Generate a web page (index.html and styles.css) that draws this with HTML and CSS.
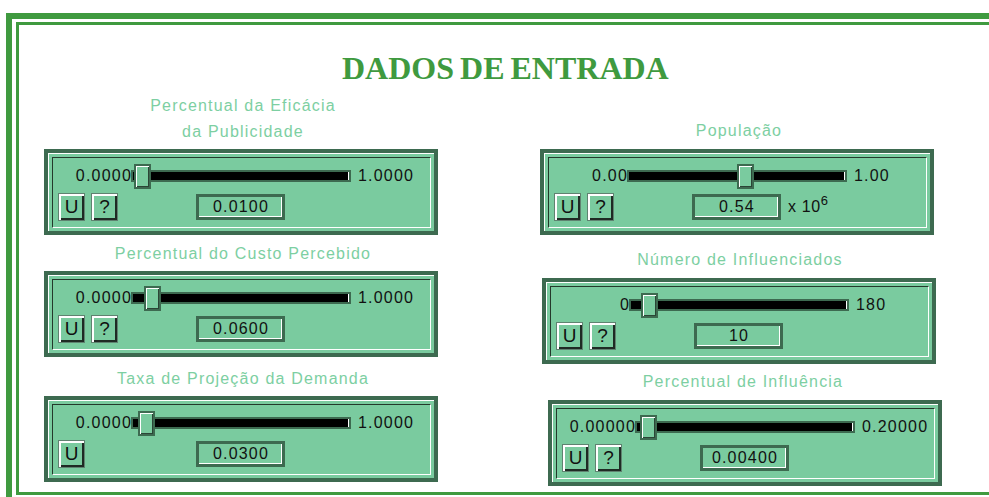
FILE: index.html
```html
<!DOCTYPE html>
<html lang="pt">
<head>
    <meta charset="UTF-8">
    <title>Dados de Entrada</title>
    <link rel="stylesheet" href="styles.css">
</head>
<body>

    <div class="frame">
        <div class="frame-inner">
            <h1 class="title">DADOS DE ENTRADA</h1>

            <div class="columns">
                <!-- left column -->
                <div class="column column-left">
                    <div class="field field-l1">
                        <p class="label">Percentual da Eficácia<br>da Publicidade</p>
                        <div class="panel">
                            <div class="inner">
                                <div class="slider-row">
                                    <span class="min">0.0000</span>
                                    <div class="track"><div class="thumb" style="left: 1px"></div></div>
                                    <span class="max">1.0000</span>
                                </div>
                                <div class="button-row">
                                    <div class="buttons"><span class="btn">U</span><span class="btn">?</span></div>
                                    <div class="value">0.0100</div>
                                </div>
                            </div>
                        </div>
                    </div>

                    <div class="field field-l2">
                        <p class="label">Percentual do Custo Percebido</p>
                        <div class="panel">
                            <div class="inner">
                                <div class="slider-row">
                                    <span class="min">0.0000</span>
                                    <div class="track"><div class="thumb" style="left: 11px"></div></div>
                                    <span class="max">1.0000</span>
                                </div>
                                <div class="button-row">
                                    <div class="buttons"><span class="btn">U</span><span class="btn">?</span></div>
                                    <div class="value">0.0600</div>
                                </div>
                            </div>
                        </div>
                    </div>

                    <div class="field field-l3">
                        <p class="label">Taxa de Projeção da Demanda</p>
                        <div class="panel">
                            <div class="inner">
                                <div class="slider-row">
                                    <span class="min">0.0000</span>
                                    <div class="track"><div class="thumb" style="left: 5px"></div></div>
                                    <span class="max">1.0000</span>
                                </div>
                                <div class="button-row">
                                    <div class="buttons"><span class="btn">U</span></div>
                                    <div class="value">0.0300</div>
                                </div>
                            </div>
                        </div>
                    </div>
                </div>

                <!-- right column -->
                <div class="column column-right">
                    <div class="field field-r1">
                        <p class="label">População</p>
                        <div class="panel">
                            <div class="inner">
                                <div class="slider-row">
                                    <span class="min">0.00</span>
                                    <div class="track"><div class="thumb" style="left: 108px"></div></div>
                                    <span class="max">1.00</span>
                                </div>
                                <div class="button-row">
                                    <div class="buttons"><span class="btn">U</span><span class="btn">?</span></div>
                                    <div class="value">0.54</div>
                                    <span class="unit">x 10<sup>6</sup></span>
                                </div>
                            </div>
                        </div>
                    </div>

                    <div class="field field-r2">
                        <p class="label">Número de Influenciados</p>
                        <div class="panel">
                            <div class="inner">
                                <div class="slider-row">
                                    <span class="min">0</span>
                                    <div class="track"><div class="thumb" style="left: 10px"></div></div>
                                    <span class="max">180</span>
                                </div>
                                <div class="button-row">
                                    <div class="buttons"><span class="btn">U</span><span class="btn">?</span></div>
                                    <div class="value">10</div>
                                </div>
                            </div>
                        </div>
                    </div>

                    <div class="field field-r3">
                        <p class="label">Percentual de Influência</p>
                        <div class="panel">
                            <div class="inner">
                                <div class="slider-row">
                                    <span class="min">0.00000</span>
                                    <div class="track"><div class="thumb" style="left: 3px"></div></div>
                                    <span class="max">0.20000</span>
                                </div>
                                <div class="button-row">
                                    <div class="buttons"><span class="btn">U</span><span class="btn">?</span></div>
                                    <div class="value">0.00400</div>
                                </div>
                            </div>
                        </div>
                    </div>
                </div>
            </div>
        </div>
    </div>

</body>
</html>
```

FILE: styles.css
```css
body {
    margin: 0;
    overflow: hidden;
    background: #fff;
    font-family: "Liberation Sans", Arial, sans-serif;
    color: #111;
}
.frame {
    margin: 13px 0 0 6px;
    border-top: 6px solid #3f9a3f;
    border-left: 6px solid #3f9a3f;
    padding: 3px 0 20px 4px;
}
.frame-inner {
    border: 3px solid #3f9a3f;
    border-right: 0;
    height: 467px;
}
.title {
    margin: 25px 0 0;
    padding-left: 323px;
    font-family: "Liberation Serif", "Times New Roman", serif;
    font-weight: bold;
    font-size: 32px;
    line-height: 36px;
    word-spacing: -2px;
    color: #3f9a3f;
}
.columns {
    display: flex;
    align-items: flex-start;
}
.column {
    width: 394px;
}
.column-left {
    margin-left: 25px;
}
.column-right {
    margin-left: 102px;
}
.field-l1 { margin-top: 7px; }
.field-l2 { margin-top: 6px; }
.field-l3 { margin-top: 9px; }
.field-l1 .label, .field-l2 .label, .field-l3 .label { margin-bottom: 4px; }
.field-r1 { margin-top: 32px; }
.field-r2 { margin-top: 12px; margin-left: 2px; }
.field-r3 { margin-top: 5px; margin-left: 8px; }
.field-r1 .label, .field-r2 .label, .field-r3 .label { margin-bottom: 5px; }

.label {
    margin: 0 0 6px;
    padding-left: 4px;
    text-align: center;
    color: #7dcfa2;
    font-size: 16px;
    line-height: 26px;
    letter-spacing: 1.2px;
}
.panel {
    box-sizing: border-box;
    width: 394px;
    border: 4px solid #3d6a50;
    background: #7acb9f;
    padding: 4px 3px 3px 4px;
    box-shadow: inset 1px 1px 0 #fff;
}
.inner {
    border: 1px solid;
    border-color: #24382b #fff #fff #24382b;
    padding: 5px 0 6px;
    font-size: 16px;
    letter-spacing: 1.2px;
}
.slider-row {
    display: grid;
    grid-template-columns: 78px 220px auto;
    align-items: center;
    height: 25px;
}
.min {
    text-align: right;
    margin-right: -1px;
}
.max {
    margin-left: 7px;
}
.track {
    position: relative;
    box-sizing: border-box;
    height: 12px;
    border: 2px solid #3d6a50;
    background: #000;
    box-shadow: inset -1px 0 0 #fff;
}
.thumb {
    position: absolute;
    top: -8px;
    box-sizing: border-box;
    width: 17px;
    height: 25px;
    border: 2px solid #3d6a50;
    background: #7acb9f;
    box-shadow: inset 1px 1px 0 #fff, inset -1px -1px 0 #2b4536;
}
.button-row {
    display: grid;
    grid-template-columns: 143px 89px auto;
    align-items: center;
    margin-top: 5px;
}
.buttons {
    display: flex;
    gap: 6px;
    padding-left: 5px;
}
.btn {
    box-sizing: border-box;
    width: 27px;
    height: 28px;
    border: 1px solid #5f8270;
    background: #7acb9f;
    box-shadow: inset 2px 2px 0 #fff, inset -2px -2px 0 #1f2a24;
    font-size: 19px;
    line-height: 26px;
    letter-spacing: 0;
    text-align: center;
}
.value {
    box-sizing: border-box;
    height: 26px;
    border: 3px solid #3d6a50;
    box-shadow: inset -1px -1px 0 #fff;
    padding-left: 1px;
    text-align: center;
    line-height: 20px;
}
.unit {
    margin-left: 7px;
    letter-spacing: 0.6px;
}
.unit sup {
    font-size: 13px;
    vertical-align: 7px;
    line-height: 0;
}
```
